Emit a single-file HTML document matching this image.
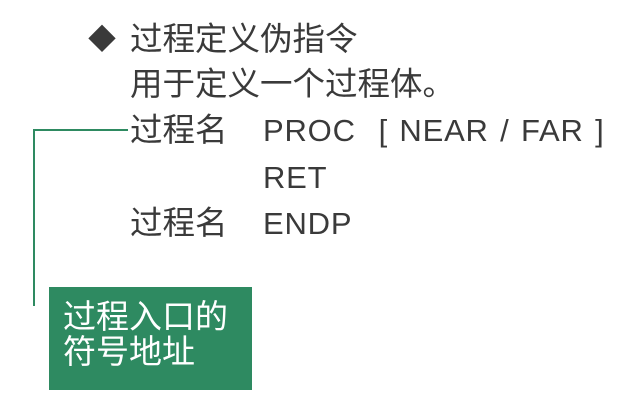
<!DOCTYPE html>
<html><head><meta charset="utf-8"><style>
body{margin:0;width:642px;height:403px;background:#fff;position:relative;overflow:hidden;font-family:"Liberation Sans","Noto Sans CJK SC",sans-serif;color:#3a3a3a}
.t{position:absolute;font-size:32.5px;line-height:40px;white-space:nowrap}
.l{font-size:31px;letter-spacing:0.8px}
.box{position:absolute;left:49px;top:287px;width:203px;height:103px;background:#2e8a61;color:#fff;font-size:33px;line-height:35px;box-sizing:border-box;padding:12px 0 0 14px;white-space:nowrap}
</style></head><body>
<div class="t" style="left:88px;top:20px;font-size:28px">◆</div>
<div class="t" style="left:130px;top:19px">过程定义伪指令</div>
<div class="t" style="left:130px;top:64px">用于定义一个过程体。</div>
<div class="t" style="left:130px;top:110px">过程名</div>
<div class="t l" style="left:263px;top:111px;word-spacing:2px">PROC&nbsp; [ NEAR / FAR ]</div>
<div class="t l" style="left:263px;top:158px">RET</div>
<div class="t" style="left:130px;top:203px">过程名</div>
<div class="t l" style="left:263px;top:204px">ENDP</div>
<div style="position:absolute;left:33px;top:129px;width:2px;height:177px;background:#2e8a61"></div>
<div style="position:absolute;left:33px;top:129px;width:95px;height:2px;background:#2e8a61"></div>
<div class="box">过程入口的<br>符号地址</div>
</body></html>
